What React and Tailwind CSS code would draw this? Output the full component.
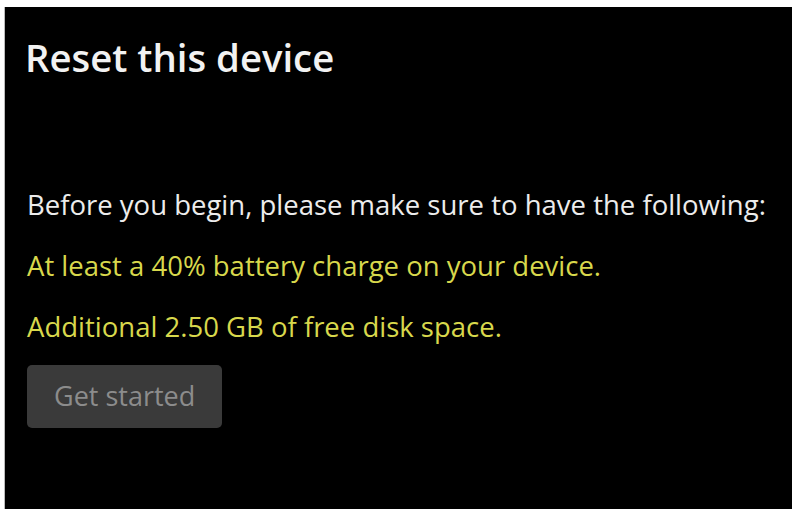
export default function App() {
  return (
    <div className="w-[795px] h-[509px] bg-white pt-[7px] pl-[4px] pr-[3px] overflow-hidden">
      <div className="h-full bg-black border-l border-[#bbbbbb] flex flex-col pl-[22px] font-['Open_Sans',sans-serif]">
        <h1 className="mt-[24px] -ml-[2px] text-[38.3px] leading-[52px] font-semibold text-[#f2f2f2]">Reset this device</h1>
        <div className="mt-[105px] flex flex-col text-[27.5px] leading-[34px]">
          <p className="text-[#ececec]">Before you begin, please make sure to have the following:</p>
          <p className="mt-[27px] text-[#d8d84c]">At least a 40% battery charge on your device.</p>
          <p className="mt-[27px] text-[#d8d84c]">Additional 2.50 GB of free disk space.</p>
        </div>
        <button className="mt-[21px] w-[195px] h-[63px] rounded-[5px] bg-[#3a3a3a] text-[#8c8c8c] text-[27px] text-left pl-[27px] self-start">Get started</button>
      </div>
    </div>
  );
}
